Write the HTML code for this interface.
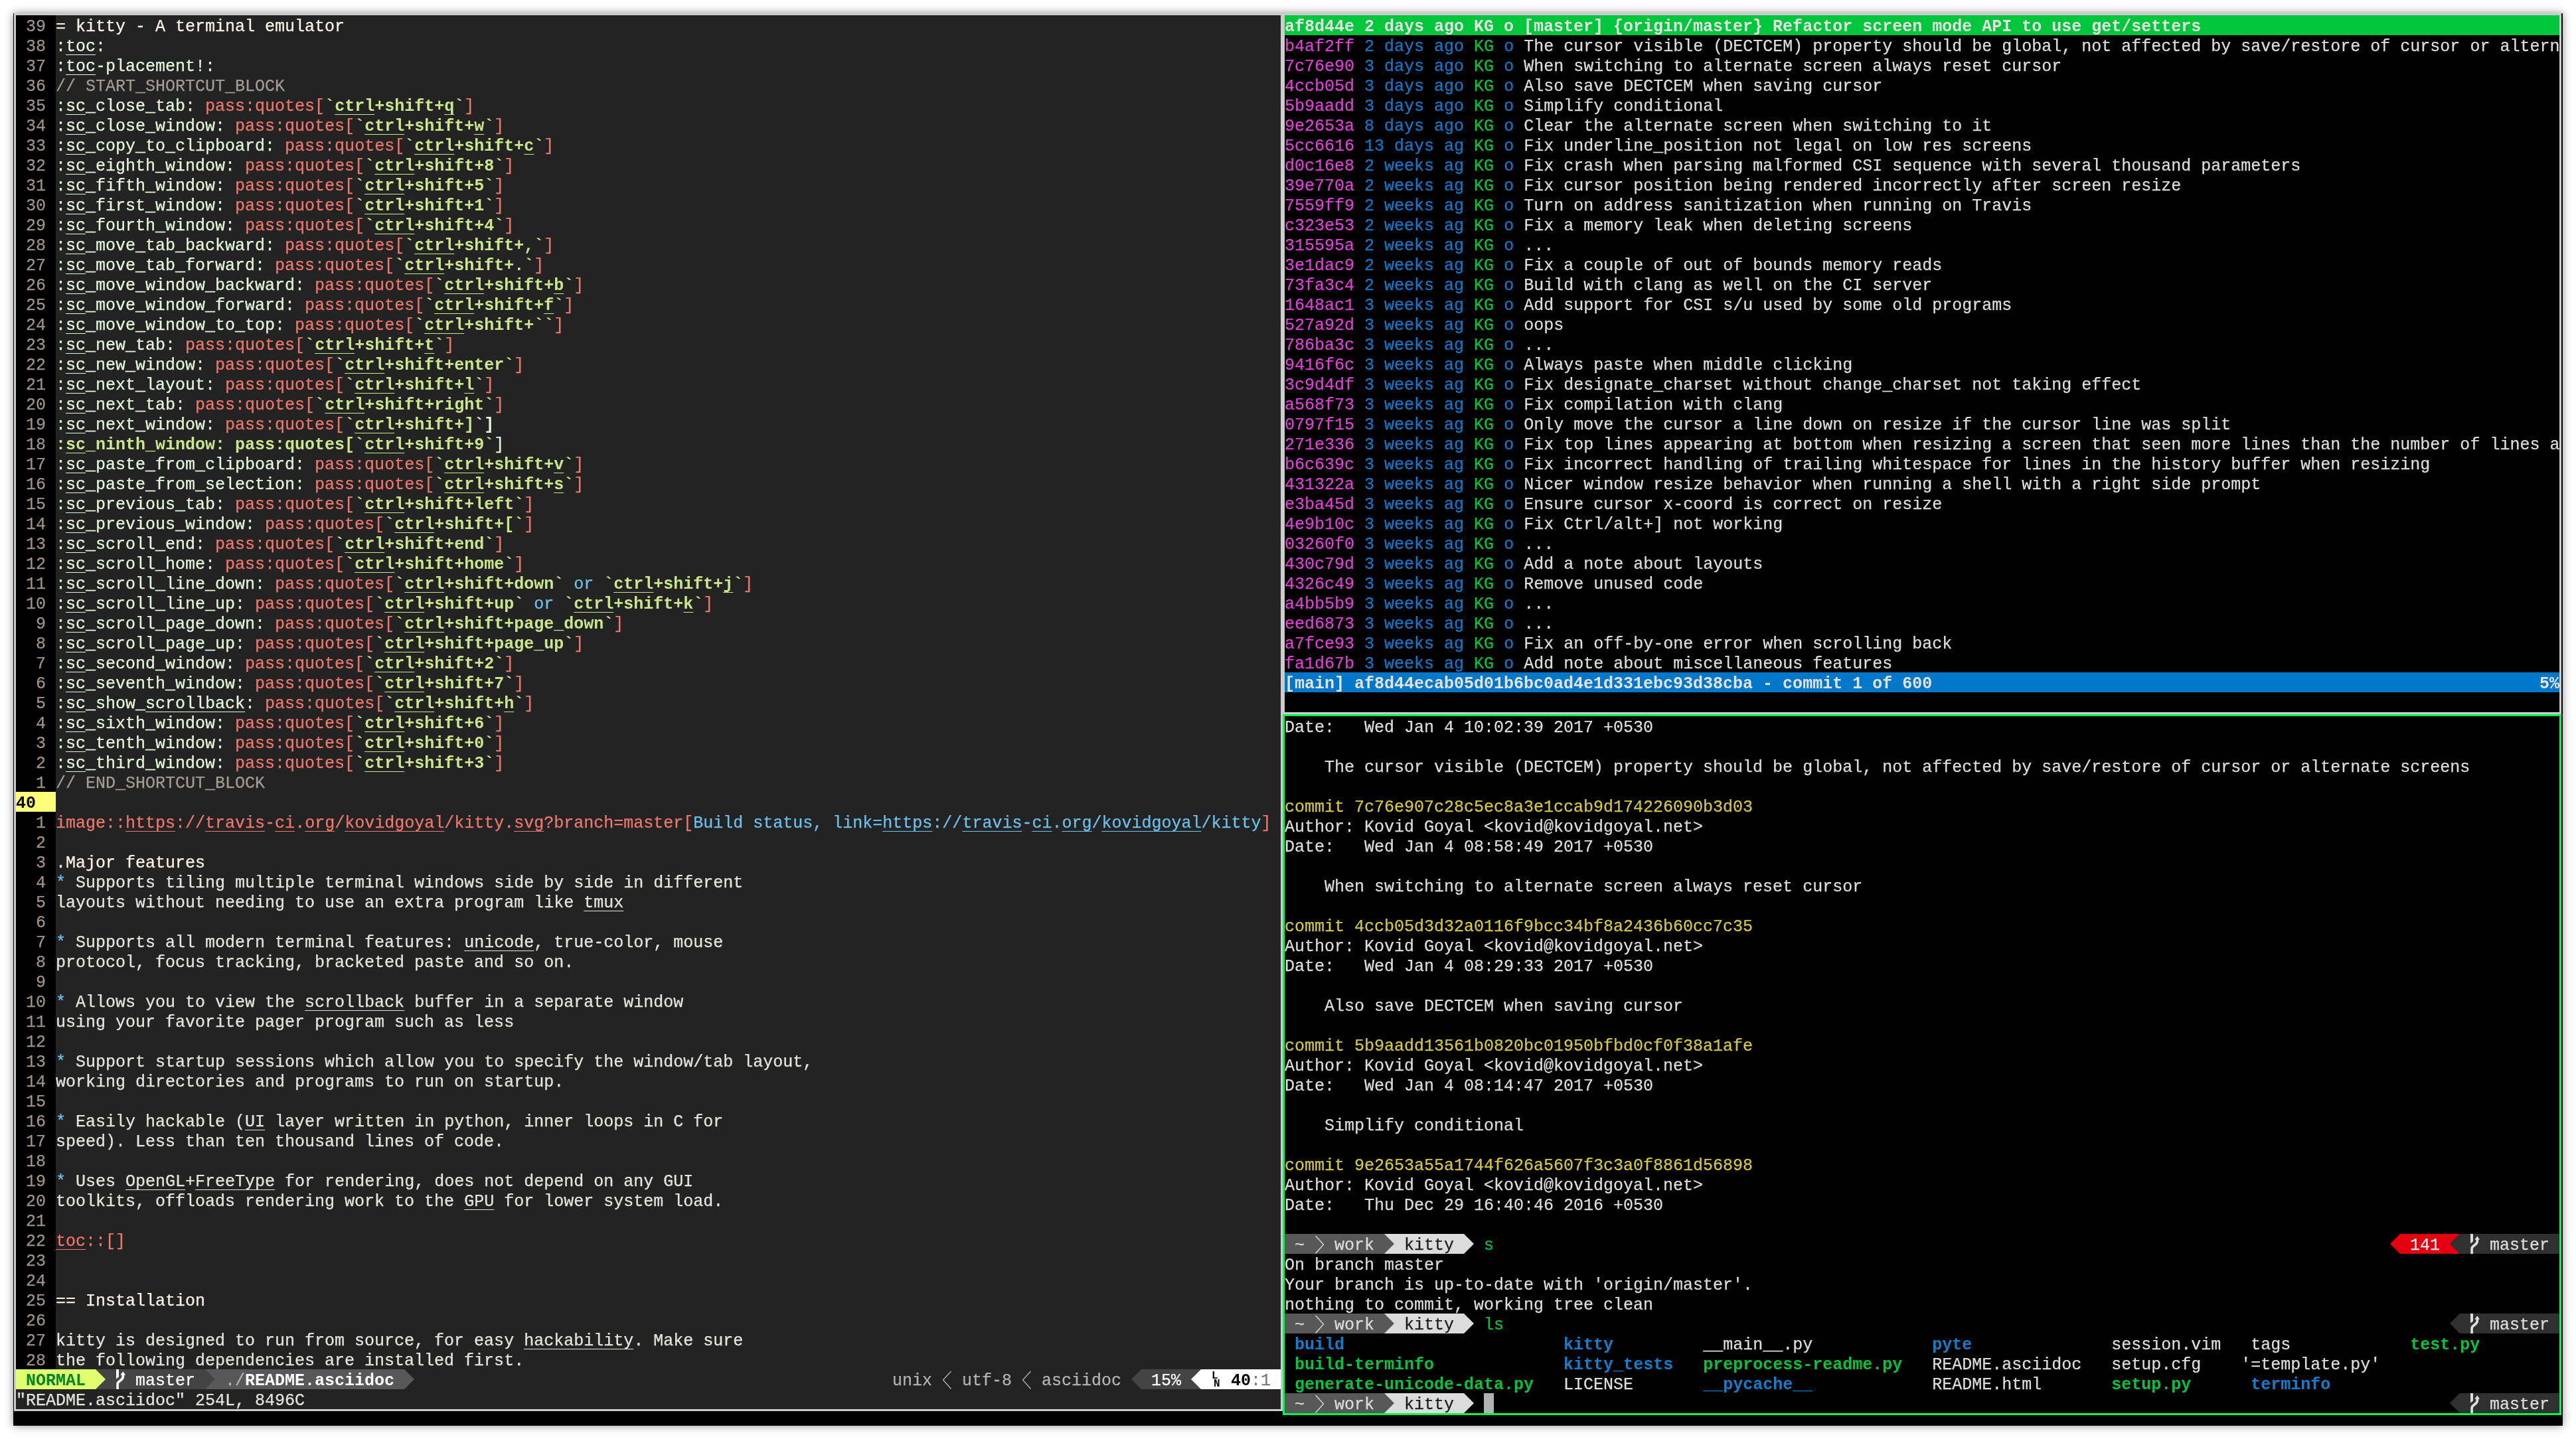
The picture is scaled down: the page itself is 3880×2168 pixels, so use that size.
<!DOCTYPE html>
<html lang="en"><head><meta charset="utf-8"><title>kitty</title>
<style>
html,body{margin:0;padding:0;background:#fff}
body{width:3880px;height:2168px;position:relative;overflow:hidden;font-family:"Liberation Mono","DejaVu Sans Mono",monospace;font-size:25px;line-height:30px}
#win{position:absolute;left:20px;top:20px;width:3840px;height:2128px;background:#000;box-shadow:0 0 12px rgba(0,0,0,.45)}
.f{position:absolute}
.pane{position:absolute;overflow:hidden}
.pane i,.pane svg,.pane .lnico{position:absolute;display:block;height:30px}
.r{position:absolute;height:30px;white-space:pre;will-change:transform;-webkit-text-stroke:.25px}
.u{text-decoration:underline;text-decoration-thickness:1px;text-underline-offset:5px}
.ln{color:#a09488}
.ti{color:#faf4e8}
.cl{color:#000;font-weight:bold}
.at{color:#e4f7da}
.cm{color:#a29c93}
.sa{color:#f0776c}
.kb{color:#cbe78c;font-weight:bold}
.kw{color:#e4f7da;font-weight:bold}
.bl{color:#6cc1ee}
.nm{color:#00852c;font-weight:bold}
.w{color:#fff}
.er{color:#eee}
.wb{color:#fff;font-weight:bold}
.sg{color:#b4b4b4}
.kk{color:#000;font-weight:bold}
.g7{color:#777}
.lnico{width:15px;color:#000;font-weight:bold;font-size:16px;line-height:16px;will-change:transform}
.lnico b{position:absolute}
.l1{left:1px;top:2.3px}
.l2{left:4px;top:14.4px}
.hb{color:#e6e2e3;font-weight:bold}
.mg{color:#e23fd9}
.db{color:#0f7acc}
.gr{color:#00c63c}
.yl{color:#d6c83e}
.pk{color:#1c1c1c}
.di{color:#0f7fd0;font-weight:bold}
.ex{color:#00c63c;font-weight:bold}
.cl,.kb,.kw,.nm,.wb,.kk,.hb,.di,.ex{-webkit-text-stroke:0}
</style></head>
<body>
<div id="win"></div>
<div class="f" style="left:21px;top:20px;width:3837px;height:3px;background:#cccccc"></div>
<div class="f" style="left:21px;top:20px;width:3px;height:2106px;background:#cccccc"></div>
<div class="f" style="left:21px;top:2123px;width:1911px;height:3px;background:#cccccc"></div>
<div class="f" style="left:1929px;top:23px;width:6px;height:1053px;background:#cccccc"></div>
<div class="f" style="left:1929px;top:1073px;width:1929px;height:3px;background:#cccccc"></div>
<div class="f" style="left:3855px;top:20px;width:3px;height:1056px;background:#cccccc"></div>
<div class="f" style="left:1929px;top:1076px;width:3px;height:1050px;background:#cccccc"></div>
<div class="f" style="left:1932px;top:1076px;width:1926px;height:3px;background:#00f94c"></div>
<div class="f" style="left:1932px;top:2129px;width:1926px;height:3px;background:#00f94c"></div>
<div class="f" style="left:1932px;top:1076px;width:3px;height:1056px;background:#00f94c"></div>
<div class="f" style="left:3855px;top:1076px;width:3px;height:1056px;background:#00f94c"></div>
<div class="pane vim" style="left:24px;top:23px;width:1905px;height:2100px;background:#232323;color:#e6e4df"><i style="left:0px;top:0px;width:60px;height:2040px;background:#000"></i><i style="left:0px;top:1170px;width:60px;height:30px;background:#ffff78"></i><i style="left:0px;top:2040px;width:120px;height:30px;background:#dfff6e"></i><i style="left:120px;top:2040px;width:165px;height:30px;background:#444444"></i><svg style="left:120px;top:2040px" width="15" height="30"><polygon points="0,0 15,15 0,30" fill="#dfff6e"/></svg><svg style="left:150px;top:2040px" width="15" height="30"><path d="M1 0H5V11.5L1 14.5Z" fill="#ffffff"/><path d="M3.1 30V22C3.1 17 11.3 17.5 11.3 11V7" fill="none" stroke="#ffffff" stroke-width="3.7"/><path d="M7.3 8.7L11.3 3.3L15 8.7Z" fill="#ffffff"/></svg><i style="left:285px;top:2040px;width:300px;height:30px;background:#585858"></i><svg style="left:285px;top:2040px" width="15" height="30"><polygon points="0,0 15,15 0,30" fill="#444444"/></svg><svg style="left:585px;top:2040px" width="15" height="30"><polygon points="0,0 15,15 0,30" fill="#585858"/></svg><svg style="left:1680px;top:2040px" width="15" height="30"><polygon points="15,0 0,15 15,30" fill="#444444"/></svg><i style="left:1695px;top:2040px;width:75px;height:30px;background:#444444"></i><i style="left:1770px;top:2040px;width:15px;height:30px;background:#444444"></i><svg style="left:1770px;top:2040px" width="15" height="30"><polygon points="15,0 0,15 15,30" fill="#ffffff"/></svg><i style="left:1785px;top:2040px;width:120px;height:30px;background:#ffffff"></i><svg style="left:1395px;top:2040px" width="15" height="30"><polyline points="13.5,3 1.5,16 13.5,29.5" fill="none" stroke="#b4b4b4" stroke-width="1.3"/></svg><svg style="left:1515px;top:2040px" width="15" height="30"><polyline points="13.5,3 1.5,16 13.5,29.5" fill="none" stroke="#b4b4b4" stroke-width="1.3"/></svg><b class="lnico" style="left:1800px;top:2040px"><b class="l1">L</b><b class="l2">N</b></b>
<div class="r" style="left:0px;top:3px"><span class="ln"> 39 </span><span class="ti">= kitty - A terminal emulator</span></div>
<div class="r" style="left:0px;top:33px"><span class="ln"> 38 </span><span class="at">:</span><span class="at u">toc</span><span class="at">:</span></div>
<div class="r" style="left:0px;top:63px"><span class="ln"> 37 </span><span class="at">:</span><span class="at u">toc</span><span class="at">-placement!:</span></div>
<div class="r" style="left:0px;top:93px"><span class="ln"> 36 </span><span class="cm">// START_SHORTCUT_BLOCK</span></div>
<div class="r" style="left:0px;top:123px"><span class="ln"> 35 </span><span class="at">:</span><span class="at u">sc</span><span class="at">_close_tab: </span><span class="sa">pass:quotes[</span><span class="kb">`</span><span class="kb u">ctrl</span><span class="kb">+shift+</span><span class="kb u">q</span><span class="kb">`</span><span class="sa">]</span></div>
<div class="r" style="left:0px;top:153px"><span class="ln"> 34 </span><span class="at">:</span><span class="at u">sc</span><span class="at">_close_window: </span><span class="sa">pass:quotes[</span><span class="kb">`</span><span class="kb u">ctrl</span><span class="kb">+shift+</span><span class="kb u">w</span><span class="kb">`</span><span class="sa">]</span></div>
<div class="r" style="left:0px;top:183px"><span class="ln"> 33 </span><span class="at">:</span><span class="at u">sc</span><span class="at">_copy_to_clipboard: </span><span class="sa">pass:quotes[</span><span class="kb">`</span><span class="kb u">ctrl</span><span class="kb">+shift+</span><span class="kb u">c</span><span class="kb">`</span><span class="sa">]</span></div>
<div class="r" style="left:0px;top:213px"><span class="ln"> 32 </span><span class="at">:</span><span class="at u">sc</span><span class="at">_eighth_window: </span><span class="sa">pass:quotes[</span><span class="kb">`</span><span class="kb u">ctrl</span><span class="kb">+shift+</span><span class="kb">8</span><span class="kb">`</span><span class="sa">]</span></div>
<div class="r" style="left:0px;top:243px"><span class="ln"> 31 </span><span class="at">:</span><span class="at u">sc</span><span class="at">_fifth_window: </span><span class="sa">pass:quotes[</span><span class="kb">`</span><span class="kb u">ctrl</span><span class="kb">+shift+</span><span class="kb">5</span><span class="kb">`</span><span class="sa">]</span></div>
<div class="r" style="left:0px;top:273px"><span class="ln"> 30 </span><span class="at">:</span><span class="at u">sc</span><span class="at">_first_window: </span><span class="sa">pass:quotes[</span><span class="kb">`</span><span class="kb u">ctrl</span><span class="kb">+shift+</span><span class="kb">1</span><span class="kb">`</span><span class="sa">]</span></div>
<div class="r" style="left:0px;top:303px"><span class="ln"> 29 </span><span class="at">:</span><span class="at u">sc</span><span class="at">_fourth_window: </span><span class="sa">pass:quotes[</span><span class="kb">`</span><span class="kb u">ctrl</span><span class="kb">+shift+</span><span class="kb">4</span><span class="kb">`</span><span class="sa">]</span></div>
<div class="r" style="left:0px;top:333px"><span class="ln"> 28 </span><span class="at">:</span><span class="at u">sc</span><span class="at">_move_tab_backward: </span><span class="sa">pass:quotes[</span><span class="kb">`</span><span class="kb u">ctrl</span><span class="kb">+shift+</span><span class="kb">,</span><span class="kb">`</span><span class="sa">]</span></div>
<div class="r" style="left:0px;top:363px"><span class="ln"> 27 </span><span class="at">:</span><span class="at u">sc</span><span class="at">_move_tab_forward: </span><span class="sa">pass:quotes[</span><span class="kb">`</span><span class="kb u">ctrl</span><span class="kb">+shift+</span><span class="kb">.</span><span class="kb">`</span><span class="sa">]</span></div>
<div class="r" style="left:0px;top:393px"><span class="ln"> 26 </span><span class="at">:</span><span class="at u">sc</span><span class="at">_move_window_backward: </span><span class="sa">pass:quotes[</span><span class="kb">`</span><span class="kb u">ctrl</span><span class="kb">+shift+</span><span class="kb u">b</span><span class="kb">`</span><span class="sa">]</span></div>
<div class="r" style="left:0px;top:423px"><span class="ln"> 25 </span><span class="at">:</span><span class="at u">sc</span><span class="at">_move_window_forward: </span><span class="sa">pass:quotes[</span><span class="kb">`</span><span class="kb u">ctrl</span><span class="kb">+shift+</span><span class="kb u">f</span><span class="kb">`</span><span class="sa">]</span></div>
<div class="r" style="left:0px;top:453px"><span class="ln"> 24 </span><span class="at">:</span><span class="at u">sc</span><span class="at">_move_window_to_top: </span><span class="sa">pass:quotes[</span><span class="kb">`</span><span class="kb u">ctrl</span><span class="kb">+shift+</span><span class="kb">`</span><span class="kb">`</span><span class="sa">]</span></div>
<div class="r" style="left:0px;top:483px"><span class="ln"> 23 </span><span class="at">:</span><span class="at u">sc</span><span class="at">_new_tab: </span><span class="sa">pass:quotes[</span><span class="kb">`</span><span class="kb u">ctrl</span><span class="kb">+shift+</span><span class="kb u">t</span><span class="kb">`</span><span class="sa">]</span></div>
<div class="r" style="left:0px;top:513px"><span class="ln"> 22 </span><span class="at">:</span><span class="at u">sc</span><span class="at">_new_window: </span><span class="sa">pass:quotes[</span><span class="kb">`</span><span class="kb u">ctrl</span><span class="kb">+shift+</span><span class="kb">enter</span><span class="kb">`</span><span class="sa">]</span></div>
<div class="r" style="left:0px;top:543px"><span class="ln"> 21 </span><span class="at">:</span><span class="at u">sc</span><span class="at">_next_layout: </span><span class="sa">pass:quotes[</span><span class="kb">`</span><span class="kb u">ctrl</span><span class="kb">+shift+</span><span class="kb u">l</span><span class="kb">`</span><span class="sa">]</span></div>
<div class="r" style="left:0px;top:573px"><span class="ln"> 20 </span><span class="at">:</span><span class="at u">sc</span><span class="at">_next_tab: </span><span class="sa">pass:quotes[</span><span class="kb">`</span><span class="kb u">ctrl</span><span class="kb">+shift+</span><span class="kb">right</span><span class="kb">`</span><span class="sa">]</span></div>
<div class="r" style="left:0px;top:603px"><span class="ln"> 19 </span><span class="at">:</span><span class="at u">sc</span><span class="at">_next_window: </span><span class="sa">pass:quotes[</span><span class="kb">`</span><span class="kb u">ctrl</span><span class="kb">+shift+]</span><span class="kw">`]</span></div>
<div class="r" style="left:0px;top:633px"><span class="ln"> 18 </span><span class="kb">:</span><span class="kb u">sc</span><span class="kb">_ninth_window: pass:quotes[`</span><span class="kb u">ctrl</span><span class="kb">+shift+9`</span><span class="at">]</span></div>
<div class="r" style="left:0px;top:663px"><span class="ln"> 17 </span><span class="at">:</span><span class="at u">sc</span><span class="at">_paste_from_clipboard: </span><span class="sa">pass:quotes[</span><span class="kb">`</span><span class="kb u">ctrl</span><span class="kb">+shift+</span><span class="kb u">v</span><span class="kb">`</span><span class="sa">]</span></div>
<div class="r" style="left:0px;top:693px"><span class="ln"> 16 </span><span class="at">:</span><span class="at u">sc</span><span class="at">_paste_from_selection: </span><span class="sa">pass:quotes[</span><span class="kb">`</span><span class="kb u">ctrl</span><span class="kb">+shift+</span><span class="kb u">s</span><span class="kb">`</span><span class="sa">]</span></div>
<div class="r" style="left:0px;top:723px"><span class="ln"> 15 </span><span class="at">:</span><span class="at u">sc</span><span class="at">_previous_tab: </span><span class="sa">pass:quotes[</span><span class="kb">`</span><span class="kb u">ctrl</span><span class="kb">+shift+</span><span class="kb">left</span><span class="kb">`</span><span class="sa">]</span></div>
<div class="r" style="left:0px;top:753px"><span class="ln"> 14 </span><span class="at">:</span><span class="at u">sc</span><span class="at">_previous_window: </span><span class="sa">pass:quotes[</span><span class="kb">`</span><span class="kb u">ctrl</span><span class="kb">+shift+</span><span class="kb">[</span><span class="kb">`</span><span class="sa">]</span></div>
<div class="r" style="left:0px;top:783px"><span class="ln"> 13 </span><span class="at">:</span><span class="at u">sc</span><span class="at">_scroll_end: </span><span class="sa">pass:quotes[</span><span class="kb">`</span><span class="kb u">ctrl</span><span class="kb">+shift+</span><span class="kb">end</span><span class="kb">`</span><span class="sa">]</span></div>
<div class="r" style="left:0px;top:813px"><span class="ln"> 12 </span><span class="at">:</span><span class="at u">sc</span><span class="at">_scroll_home: </span><span class="sa">pass:quotes[</span><span class="kb">`</span><span class="kb u">ctrl</span><span class="kb">+shift+</span><span class="kb">home</span><span class="kb">`</span><span class="sa">]</span></div>
<div class="r" style="left:0px;top:843px"><span class="ln"> 11 </span><span class="at">:</span><span class="at u">sc</span><span class="at">_scroll_line_down: </span><span class="sa">pass:quotes[</span><span class="kb">`</span><span class="kb u">ctrl</span><span class="kb">+shift+</span><span class="kb">down</span><span class="kb">`</span><span class="bl"> or </span><span class="kb">`</span><span class="kb u">ctrl</span><span class="kb">+shift+</span><span class="kb u">j</span><span class="kb">`</span><span class="sa">]</span></div>
<div class="r" style="left:0px;top:873px"><span class="ln"> 10 </span><span class="at">:</span><span class="at u">sc</span><span class="at">_scroll_line_up: </span><span class="sa">pass:quotes[</span><span class="kb">`</span><span class="kb u">ctrl</span><span class="kb">+shift+</span><span class="kb">up</span><span class="kb">`</span><span class="bl"> or </span><span class="kb">`</span><span class="kb u">ctrl</span><span class="kb">+shift+</span><span class="kb u">k</span><span class="kb">`</span><span class="sa">]</span></div>
<div class="r" style="left:0px;top:903px"><span class="ln">  9 </span><span class="at">:</span><span class="at u">sc</span><span class="at">_scroll_page_down: </span><span class="sa">pass:quotes[</span><span class="kb">`</span><span class="kb u">ctrl</span><span class="kb">+shift+</span><span class="kb">page_down</span><span class="kb">`</span><span class="sa">]</span></div>
<div class="r" style="left:0px;top:933px"><span class="ln">  8 </span><span class="at">:</span><span class="at u">sc</span><span class="at">_scroll_page_up: </span><span class="sa">pass:quotes[</span><span class="kb">`</span><span class="kb u">ctrl</span><span class="kb">+shift+</span><span class="kb">page_up</span><span class="kb">`</span><span class="sa">]</span></div>
<div class="r" style="left:0px;top:963px"><span class="ln">  7 </span><span class="at">:</span><span class="at u">sc</span><span class="at">_second_window: </span><span class="sa">pass:quotes[</span><span class="kb">`</span><span class="kb u">ctrl</span><span class="kb">+shift+</span><span class="kb">2</span><span class="kb">`</span><span class="sa">]</span></div>
<div class="r" style="left:0px;top:993px"><span class="ln">  6 </span><span class="at">:</span><span class="at u">sc</span><span class="at">_seventh_window: </span><span class="sa">pass:quotes[</span><span class="kb">`</span><span class="kb u">ctrl</span><span class="kb">+shift+</span><span class="kb">7</span><span class="kb">`</span><span class="sa">]</span></div>
<div class="r" style="left:0px;top:1023px"><span class="ln">  5 </span><span class="at">:</span><span class="at u">sc</span><span class="at">_show_</span><span class="at u">scrollback</span><span class="at">: </span><span class="sa">pass:quotes[</span><span class="kb">`</span><span class="kb u">ctrl</span><span class="kb">+shift+</span><span class="kb u">h</span><span class="kb">`</span><span class="sa">]</span></div>
<div class="r" style="left:0px;top:1053px"><span class="ln">  4 </span><span class="at">:</span><span class="at u">sc</span><span class="at">_sixth_window: </span><span class="sa">pass:quotes[</span><span class="kb">`</span><span class="kb u">ctrl</span><span class="kb">+shift+</span><span class="kb">6</span><span class="kb">`</span><span class="sa">]</span></div>
<div class="r" style="left:0px;top:1083px"><span class="ln">  3 </span><span class="at">:</span><span class="at u">sc</span><span class="at">_tenth_window: </span><span class="sa">pass:quotes[</span><span class="kb">`</span><span class="kb u">ctrl</span><span class="kb">+shift+</span><span class="kb">0</span><span class="kb">`</span><span class="sa">]</span></div>
<div class="r" style="left:0px;top:1113px"><span class="ln">  2 </span><span class="at">:</span><span class="at u">sc</span><span class="at">_third_window: </span><span class="sa">pass:quotes[</span><span class="kb">`</span><span class="kb u">ctrl</span><span class="kb">+shift+</span><span class="kb">3</span><span class="kb">`</span><span class="sa">]</span></div>
<div class="r" style="left:0px;top:1143px"><span class="ln">  1 </span><span class="cm">// END_SHORTCUT_BLOCK</span></div>
<div class="r" style="left:0px;top:1173px"><span class="cl">40 </span></div>
<div class="r" style="left:0px;top:1203px"><span class="ln">  1 </span><span class="sa">image::</span><span class="sa u">https</span><span class="sa">://</span><span class="sa u">travis</span><span class="sa">-</span><span class="sa u">ci</span><span class="sa">.</span><span class="sa u">org</span><span class="sa">/</span><span class="sa u">kovidgoyal</span><span class="sa">/kitty.</span><span class="sa u">svg</span><span class="sa">?branch=master[</span><span class="bl">Build status, link=</span><span class="bl u">https</span><span class="bl">://</span><span class="bl u">travis</span><span class="bl">-</span><span class="bl u">ci</span><span class="bl">.</span><span class="bl u">org</span><span class="bl">/</span><span class="bl u">kovidgoyal</span><span class="bl">/kitty</span><span class="sa">]</span></div>
<div class="r" style="left:0px;top:1233px"><span class="ln">  2 </span></div>
<div class="r" style="left:0px;top:1263px"><span class="ln">  3 </span><span class="ti">.Major features</span></div>
<div class="r" style="left:0px;top:1293px"><span class="ln">  4 </span><span class="bl">*</span> Supports tiling multiple terminal windows side by side in different</div>
<div class="r" style="left:0px;top:1323px"><span class="ln">  5 </span>layouts without needing to use an extra program like <span class="u">tmux</span></div>
<div class="r" style="left:0px;top:1353px"><span class="ln">  6 </span></div>
<div class="r" style="left:0px;top:1383px"><span class="ln">  7 </span><span class="bl">*</span> Supports all modern terminal features: <span class="u">unicode</span>, true-color, mouse</div>
<div class="r" style="left:0px;top:1413px"><span class="ln">  8 </span>protocol, focus tracking, bracketed paste and so on.</div>
<div class="r" style="left:0px;top:1443px"><span class="ln">  9 </span></div>
<div class="r" style="left:0px;top:1473px"><span class="ln"> 10 </span><span class="bl">*</span> Allows you to view the <span class="u">scrollback</span> buffer in a separate window</div>
<div class="r" style="left:0px;top:1503px"><span class="ln"> 11 </span>using your favorite pager program such as less</div>
<div class="r" style="left:0px;top:1533px"><span class="ln"> 12 </span></div>
<div class="r" style="left:0px;top:1563px"><span class="ln"> 13 </span><span class="bl">*</span> Support startup sessions which allow you to specify the window/tab layout,</div>
<div class="r" style="left:0px;top:1593px"><span class="ln"> 14 </span>working directories and programs to run on startup.</div>
<div class="r" style="left:0px;top:1623px"><span class="ln"> 15 </span></div>
<div class="r" style="left:0px;top:1653px"><span class="ln"> 16 </span><span class="bl">*</span> Easily hackable (<span class="u">UI</span> layer written in python, inner loops in C for</div>
<div class="r" style="left:0px;top:1683px"><span class="ln"> 17 </span>speed). Less than ten thousand lines of code.</div>
<div class="r" style="left:0px;top:1713px"><span class="ln"> 18 </span></div>
<div class="r" style="left:0px;top:1743px"><span class="ln"> 19 </span><span class="bl">*</span> Uses <span class="u">OpenGL</span>+<span class="u">FreeType</span> for rendering, does not depend on any GUI</div>
<div class="r" style="left:0px;top:1773px"><span class="ln"> 20 </span>toolkits, offloads rendering work to the <span class="u">GPU</span> for lower system load.</div>
<div class="r" style="left:0px;top:1803px"><span class="ln"> 21 </span></div>
<div class="r" style="left:0px;top:1833px"><span class="ln"> 22 </span><span class="sa u">toc</span><span class="sa">::[]</span></div>
<div class="r" style="left:0px;top:1863px"><span class="ln"> 23 </span></div>
<div class="r" style="left:0px;top:1893px"><span class="ln"> 24 </span></div>
<div class="r" style="left:0px;top:1923px"><span class="ln"> 25 </span><span class="ti">== Installation</span></div>
<div class="r" style="left:0px;top:1953px"><span class="ln"> 26 </span></div>
<div class="r" style="left:0px;top:1983px"><span class="ln"> 27 </span>kitty is designed to run from source, for easy <span class="u">hackability</span>. Make sure</div>
<div class="r" style="left:0px;top:2013px"><span class="ln"> 28 </span>the following dependencies are installed first.</div>
<div class="r" style="left:0px;top:2043px"><span class="nm"> NORMAL </span></div>
<div class="r" style="left:180px;top:2043px"><span class="w">master</span></div>
<div class="r" style="left:315px;top:2043px"><span class="sg">./</span><span class="wb">README.asciidoc</span></div>
<div class="r" style="left:1320px;top:2043px"><span class="sg">unix</span></div>
<div class="r" style="left:1425px;top:2043px"><span class="sg">utf-8</span></div>
<div class="r" style="left:1545px;top:2043px"><span class="sg">asciidoc</span></div>
<div class="r" style="left:1710px;top:2043px"><span class="w">15%</span></div>
<div class="r" style="left:1830px;top:2043px"><span class="kk">40</span><span class="g7">:1</span></div>
<div class="r" style="left:0px;top:2073px">"README.asciidoc" 254L, 8496C</div></div>
<div class="pane tig" style="left:1935px;top:23px;width:1920px;height:1050px;background:#000000;color:#dddddd"><i style="left:0px;top:0px;width:1920px;height:30px;background:#00c63c"></i><i style="left:0px;top:990px;width:1920px;height:30px;background:#0077c8"></i>
<div class="r" style="left:0px;top:3px"><span class="hb">af8d44e 2 days ago KG o [master] {origin/master} Refactor screen mode API to use get/setters</span></div>
<div class="r" style="left:0px;top:33px"><span class="mg">b4af2ff</span> <span class="db">2 days ago</span> <span class="gr">KG</span> <span class="db">o</span> The cursor visible (DECTCEM) property should be global, not affected by save/restore of cursor or altern</div>
<div class="r" style="left:0px;top:63px"><span class="mg">7c76e90</span> <span class="db">3 days ago</span> <span class="gr">KG</span> <span class="db">o</span> When switching to alternate screen always reset cursor</div>
<div class="r" style="left:0px;top:93px"><span class="mg">4ccb05d</span> <span class="db">3 days ago</span> <span class="gr">KG</span> <span class="db">o</span> Also save DECTCEM when saving cursor</div>
<div class="r" style="left:0px;top:123px"><span class="mg">5b9aadd</span> <span class="db">3 days ago</span> <span class="gr">KG</span> <span class="db">o</span> Simplify conditional</div>
<div class="r" style="left:0px;top:153px"><span class="mg">9e2653a</span> <span class="db">8 days ago</span> <span class="gr">KG</span> <span class="db">o</span> Clear the alternate screen when switching to it</div>
<div class="r" style="left:0px;top:183px"><span class="mg">5cc6616</span> <span class="db">13 days ag</span> <span class="gr">KG</span> <span class="db">o</span> Fix underline_position not legal on low res screens</div>
<div class="r" style="left:0px;top:213px"><span class="mg">d0c16e8</span> <span class="db">2 weeks ag</span> <span class="gr">KG</span> <span class="db">o</span> Fix crash when parsing malformed CSI sequence with several thousand parameters</div>
<div class="r" style="left:0px;top:243px"><span class="mg">39e770a</span> <span class="db">2 weeks ag</span> <span class="gr">KG</span> <span class="db">o</span> Fix cursor position being rendered incorrectly after screen resize</div>
<div class="r" style="left:0px;top:273px"><span class="mg">7559ff9</span> <span class="db">2 weeks ag</span> <span class="gr">KG</span> <span class="db">o</span> Turn on address sanitization when running on Travis</div>
<div class="r" style="left:0px;top:303px"><span class="mg">c323e53</span> <span class="db">2 weeks ag</span> <span class="gr">KG</span> <span class="db">o</span> Fix a memory leak when deleting screens</div>
<div class="r" style="left:0px;top:333px"><span class="mg">315595a</span> <span class="db">2 weeks ag</span> <span class="gr">KG</span> <span class="db">o</span> ...</div>
<div class="r" style="left:0px;top:363px"><span class="mg">3e1dac9</span> <span class="db">2 weeks ag</span> <span class="gr">KG</span> <span class="db">o</span> Fix a couple of out of bounds memory reads</div>
<div class="r" style="left:0px;top:393px"><span class="mg">73fa3c4</span> <span class="db">2 weeks ag</span> <span class="gr">KG</span> <span class="db">o</span> Build with clang as well on the CI server</div>
<div class="r" style="left:0px;top:423px"><span class="mg">1648ac1</span> <span class="db">3 weeks ag</span> <span class="gr">KG</span> <span class="db">o</span> Add support for CSI s/u used by some old programs</div>
<div class="r" style="left:0px;top:453px"><span class="mg">527a92d</span> <span class="db">3 weeks ag</span> <span class="gr">KG</span> <span class="db">o</span> oops</div>
<div class="r" style="left:0px;top:483px"><span class="mg">786ba3c</span> <span class="db">3 weeks ag</span> <span class="gr">KG</span> <span class="db">o</span> ...</div>
<div class="r" style="left:0px;top:513px"><span class="mg">9416f6c</span> <span class="db">3 weeks ag</span> <span class="gr">KG</span> <span class="db">o</span> Always paste when middle clicking</div>
<div class="r" style="left:0px;top:543px"><span class="mg">3c9d4df</span> <span class="db">3 weeks ag</span> <span class="gr">KG</span> <span class="db">o</span> Fix designate_charset without change_charset not taking effect</div>
<div class="r" style="left:0px;top:573px"><span class="mg">a568f73</span> <span class="db">3 weeks ag</span> <span class="gr">KG</span> <span class="db">o</span> Fix compilation with clang</div>
<div class="r" style="left:0px;top:603px"><span class="mg">0797f15</span> <span class="db">3 weeks ag</span> <span class="gr">KG</span> <span class="db">o</span> Only move the cursor a line down on resize if the cursor line was split</div>
<div class="r" style="left:0px;top:633px"><span class="mg">271e336</span> <span class="db">3 weeks ag</span> <span class="gr">KG</span> <span class="db">o</span> Fix top lines appearing at bottom when resizing a screen that seen more lines than the number of lines a</div>
<div class="r" style="left:0px;top:663px"><span class="mg">b6c639c</span> <span class="db">3 weeks ag</span> <span class="gr">KG</span> <span class="db">o</span> Fix incorrect handling of trailing whitespace for lines in the history buffer when resizing</div>
<div class="r" style="left:0px;top:693px"><span class="mg">431322a</span> <span class="db">3 weeks ag</span> <span class="gr">KG</span> <span class="db">o</span> Nicer window resize behavior when running a shell with a right side prompt</div>
<div class="r" style="left:0px;top:723px"><span class="mg">e3ba45d</span> <span class="db">3 weeks ag</span> <span class="gr">KG</span> <span class="db">o</span> Ensure cursor x-coord is correct on resize</div>
<div class="r" style="left:0px;top:753px"><span class="mg">4e9b10c</span> <span class="db">3 weeks ag</span> <span class="gr">KG</span> <span class="db">o</span> Fix Ctrl/alt+] not working</div>
<div class="r" style="left:0px;top:783px"><span class="mg">03260f0</span> <span class="db">3 weeks ag</span> <span class="gr">KG</span> <span class="db">o</span> ...</div>
<div class="r" style="left:0px;top:813px"><span class="mg">430c79d</span> <span class="db">3 weeks ag</span> <span class="gr">KG</span> <span class="db">o</span> Add a note about layouts</div>
<div class="r" style="left:0px;top:843px"><span class="mg">4326c49</span> <span class="db">3 weeks ag</span> <span class="gr">KG</span> <span class="db">o</span> Remove unused code</div>
<div class="r" style="left:0px;top:873px"><span class="mg">a4bb5b9</span> <span class="db">3 weeks ag</span> <span class="gr">KG</span> <span class="db">o</span> ...</div>
<div class="r" style="left:0px;top:903px"><span class="mg">eed6873</span> <span class="db">3 weeks ag</span> <span class="gr">KG</span> <span class="db">o</span> ...</div>
<div class="r" style="left:0px;top:933px"><span class="mg">a7fce93</span> <span class="db">3 weeks ag</span> <span class="gr">KG</span> <span class="db">o</span> Fix an off-by-one error when scrolling back</div>
<div class="r" style="left:0px;top:963px"><span class="mg">fa1d67b</span> <span class="db">3 weeks ag</span> <span class="gr">KG</span> <span class="db">o</span> Add note about miscellaneous features</div>
<div class="r" style="left:0px;top:993px"><span class="hb">[main] af8d44ecab05d01b6bc0ad4e1d331ebc93d38cba - commit 1 of 600</span></div>
<div class="r" style="left:1890px;top:993px"><span class="hb">5%</span></div></div>
<div class="pane sh" style="left:1935px;top:1079px;width:1920px;height:1050px;background:#000000;color:#dddddd"><i style="left:0px;top:780px;width:150px;height:30px;background:#585858"></i><svg style="left:45px;top:780px" width="15" height="30"><polyline points="1.5,3 13.5,16 1.5,29.5" fill="none" stroke="#dddddd" stroke-width="1.3"/></svg><i style="left:150px;top:780px;width:120px;height:30px;background:#dcdcdc"></i><svg style="left:150px;top:780px" width="15" height="30"><polygon points="0,0 15,15 0,30" fill="#585858"/></svg><svg style="left:270px;top:780px" width="15" height="30"><polygon points="0,0 15,15 0,30" fill="#dcdcdc"/></svg><svg style="left:1665px;top:780px" width="15" height="30"><polygon points="15,0 0,15 15,30" fill="#e4000f"/></svg><i style="left:1680px;top:780px;width:90px;height:30px;background:#e4000f"></i><svg style="left:1755px;top:780px" width="15" height="30"><polygon points="15,0 0,15 15,30" fill="#303030"/></svg><i style="left:1770px;top:780px;width:150px;height:30px;background:#303030"></i><svg style="left:1785px;top:780px" width="15" height="30"><path d="M1 0H5V11.5L1 14.5Z" fill="#dddddd"/><path d="M3.1 30V22C3.1 17 11.3 17.5 11.3 11V7" fill="none" stroke="#dddddd" stroke-width="3.7"/><path d="M7.3 8.7L11.3 3.3L15 8.7Z" fill="#dddddd"/></svg><i style="left:0px;top:900px;width:150px;height:30px;background:#585858"></i><svg style="left:45px;top:900px" width="15" height="30"><polyline points="1.5,3 13.5,16 1.5,29.5" fill="none" stroke="#dddddd" stroke-width="1.3"/></svg><i style="left:150px;top:900px;width:120px;height:30px;background:#dcdcdc"></i><svg style="left:150px;top:900px" width="15" height="30"><polygon points="0,0 15,15 0,30" fill="#585858"/></svg><svg style="left:270px;top:900px" width="15" height="30"><polygon points="0,0 15,15 0,30" fill="#dcdcdc"/></svg><svg style="left:1755px;top:900px" width="15" height="30"><polygon points="15,0 0,15 15,30" fill="#303030"/></svg><i style="left:1770px;top:900px;width:150px;height:30px;background:#303030"></i><svg style="left:1785px;top:900px" width="15" height="30"><path d="M1 0H5V11.5L1 14.5Z" fill="#dddddd"/><path d="M3.1 30V22C3.1 17 11.3 17.5 11.3 11V7" fill="none" stroke="#dddddd" stroke-width="3.7"/><path d="M7.3 8.7L11.3 3.3L15 8.7Z" fill="#dddddd"/></svg><i style="left:0px;top:1020px;width:150px;height:30px;background:#585858"></i><svg style="left:45px;top:1020px" width="15" height="30"><polyline points="1.5,3 13.5,16 1.5,29.5" fill="none" stroke="#dddddd" stroke-width="1.3"/></svg><i style="left:150px;top:1020px;width:120px;height:30px;background:#dcdcdc"></i><svg style="left:150px;top:1020px" width="15" height="30"><polygon points="0,0 15,15 0,30" fill="#585858"/></svg><svg style="left:270px;top:1020px" width="15" height="30"><polygon points="0,0 15,15 0,30" fill="#dcdcdc"/></svg><svg style="left:1755px;top:1020px" width="15" height="30"><polygon points="15,0 0,15 15,30" fill="#303030"/></svg><i style="left:1770px;top:1020px;width:150px;height:30px;background:#303030"></i><svg style="left:1785px;top:1020px" width="15" height="30"><path d="M1 0H5V11.5L1 14.5Z" fill="#dddddd"/><path d="M3.1 30V22C3.1 17 11.3 17.5 11.3 11V7" fill="none" stroke="#dddddd" stroke-width="3.7"/><path d="M7.3 8.7L11.3 3.3L15 8.7Z" fill="#dddddd"/></svg><i style="left:300px;top:1020px;width:15px;height:30px;background:#b2b2b2"></i>
<div class="r" style="left:0px;top:3px">Date:   Wed Jan 4 10:02:39 2017 +0530</div>
<div class="r" style="left:0px;top:63px">    The cursor visible (DECTCEM) property should be global, not affected by save/restore of cursor or alternate screens</div>
<div class="r" style="left:0px;top:123px"><span class="yl">commit 7c76e907c28c5ec8a3e1ccab9d174226090b3d03</span></div>
<div class="r" style="left:0px;top:153px">Author: Kovid Goyal &lt;kovid@kovidgoyal.net&gt;</div>
<div class="r" style="left:0px;top:183px">Date:   Wed Jan 4 08:58:49 2017 +0530</div>
<div class="r" style="left:0px;top:243px">    When switching to alternate screen always reset cursor</div>
<div class="r" style="left:0px;top:303px"><span class="yl">commit 4ccb05d3d32a0116f9bcc34bf8a2436b60cc7c35</span></div>
<div class="r" style="left:0px;top:333px">Author: Kovid Goyal &lt;kovid@kovidgoyal.net&gt;</div>
<div class="r" style="left:0px;top:363px">Date:   Wed Jan 4 08:29:33 2017 +0530</div>
<div class="r" style="left:0px;top:423px">    Also save DECTCEM when saving cursor</div>
<div class="r" style="left:0px;top:483px"><span class="yl">commit 5b9aadd13561b0820bc01950bfbd0cf0f38a1afe</span></div>
<div class="r" style="left:0px;top:513px">Author: Kovid Goyal &lt;kovid@kovidgoyal.net&gt;</div>
<div class="r" style="left:0px;top:543px">Date:   Wed Jan 4 08:14:47 2017 +0530</div>
<div class="r" style="left:0px;top:603px">    Simplify conditional</div>
<div class="r" style="left:0px;top:663px"><span class="yl">commit 9e2653a55a1744f626a5607f3c3a0f8861d56898</span></div>
<div class="r" style="left:0px;top:693px">Author: Kovid Goyal &lt;kovid@kovidgoyal.net&gt;</div>
<div class="r" style="left:0px;top:723px">Date:   Thu Dec 29 16:40:46 2016 +0530</div>
<div class="r" style="left:0px;top:783px"> ~   work</div>
<div class="r" style="left:180px;top:783px"><span class="pk">kitty</span></div>
<div class="r" style="left:300px;top:783px"><span class="gr">s</span></div>
<div class="r" style="left:1695px;top:783px"><span class="er">141</span></div>
<div class="r" style="left:1815px;top:783px">master</div>
<div class="r" style="left:0px;top:813px">On branch master</div>
<div class="r" style="left:0px;top:843px">Your branch is up-to-date with 'origin/master'.</div>
<div class="r" style="left:0px;top:873px">nothing to commit, working tree clean</div>
<div class="r" style="left:0px;top:903px"> ~   work</div>
<div class="r" style="left:180px;top:903px"><span class="pk">kitty</span></div>
<div class="r" style="left:300px;top:903px"><span class="gr">ls</span></div>
<div class="r" style="left:1815px;top:903px">master</div>
<div class="r" style="left:0px;top:933px"> <span class="di">build</span>                      <span class="di">kitty</span>         __main__.py            <span class="di">pyte</span>              session.vim   tags            <span class="ex">test.py</span></div>
<div class="r" style="left:0px;top:963px"> <span class="ex">build-terminfo</span>             <span class="di">kitty_tests</span>   <span class="ex">preprocess-readme.py</span>   README.asciidoc   setup.cfg    '=template.py'</div>
<div class="r" style="left:0px;top:993px"> <span class="ex">generate-unicode-data.py</span>   LICENSE       <span class="di">__pycache__</span>            README.html       <span class="ex">setup.py</span>      <span class="di">terminfo</span></div>
<div class="r" style="left:0px;top:1023px"> ~   work</div>
<div class="r" style="left:180px;top:1023px"><span class="pk">kitty</span></div>
<div class="r" style="left:1815px;top:1023px">master</div></div>
</body></html>
